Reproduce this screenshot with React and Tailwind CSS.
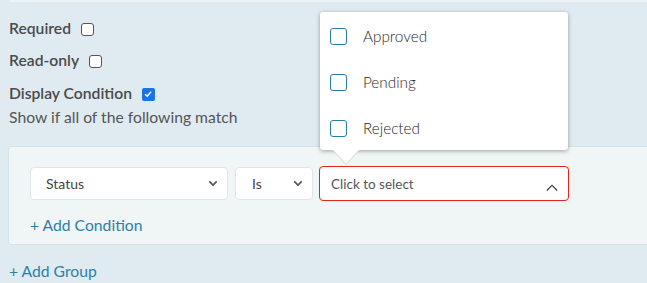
import React from 'react';

function Box({ checked }) {
  return checked ? (
    <span className="inline-flex w-[13px] h-[13px] rounded-[2px] bg-[#1a73e8] items-center justify-center">
      <svg viewBox="0 0 12 12" className="w-[10px] h-[10px]">
        <path d="M2.5 6.3 L5 8.6 L9.6 3.4" fill="none" stroke="#fff" strokeWidth="1.8" />
      </svg>
    </span>
  ) : (
    <span className="inline-block w-[13px] h-[13px] rounded-[3px] border border-[#555] bg-white" />
  );
}

function Chevron({ up }) {
  return up ? (
    <svg viewBox="0 0 12 7" className="w-[12px] h-[7px]">
      <path d="M0.8 6.5 L6 1.3 L11.2 6.5" fill="none" stroke="#444" strokeWidth="1.3" />
    </svg>
  ) : (
    <svg viewBox="0 0 12 8" className="w-[10px] h-[7px]">
      <path d="M1.5 1.5 L6 6 L10.5 1.5" fill="none" stroke="#555" strokeWidth="2" />
    </svg>
  );
}

export default function App() {
  const options = ['Approved', 'Pending', 'Rejected'];

  return (
    <div
      className="relative w-full h-[283px] overflow-hidden bg-[#dfebf0] text-[15.7px] text-[#4d4d4d]"
      style={{ fontFamily: 'Lato, "Open Sans", sans-serif' }}
    >
      <div className="h-[2px] ml-[10px] bg-[#eef4f6]" />

      <div className="pl-[9px]">
        <div className="mt-[17px] h-[20px] flex items-center gap-[10px] font-semibold text-[#4a4a4a]">
          <span>Required</span>
          <Box />
        </div>
        <div className="mt-[12px] h-[20px] flex items-center gap-[10px] font-semibold text-[#4a4a4a]">
          <span>Read-only</span>
          <Box />
        </div>
        <div className="mt-[13px] h-[20px] flex items-center gap-[10px] font-semibold text-[#4a4a4a]">
          <span>Display Condition</span>
          <Box checked />
        </div>
        <div className="mt-[4px] h-[20px] flex items-center text-[#555]">
          Show if all of the following match
        </div>
      </div>

      {/* group box */}
      <div className="mt-[18px] ml-[8px] -mr-[20px] h-[99px] bg-[#f0f5f6] border border-[#d7e2e6] rounded-[3px] pt-[19px] pl-[21px]">
        <div className="flex items-start">
          <div className="w-[198px] h-[33px] mt-[1px] bg-white border border-[#dfe6e9] rounded-[4px] flex items-center justify-between pl-[15px] pr-[9px] text-[14px] text-[#444]">
            <span>Status</span>
            <Chevron />
          </div>
          <div className="ml-[7px] w-[78px] h-[33px] mt-[1px] bg-white border border-[#dfe6e9] rounded-[4px] flex items-center justify-between pl-[16px] pr-[9px] text-[14px] text-[#444]">
            <span>Is</span>
            <Chevron />
          </div>
          <div className="ml-[6px] w-[250px] h-[35px] bg-white border border-[#e3261a] rounded-[4px] flex justify-between pl-[11px] pr-[10px] text-[13.5px] text-[#555]">
            <span className="mt-[7px]">Click to select</span>
            <span className="mt-[17px] flex">
              <Chevron up />
            </span>
          </div>
        </div>
        <div className="mt-[15px] h-[20px] flex items-center text-[#2f7ea8]">+ Add Condition</div>
      </div>

      <div className="mt-[17px] pl-[9px] h-[20px] flex items-center text-[#2f7ea8]">+ Add Group</div>

      {/* dropdown popover */}
      <div className="absolute left-[320px] top-[12px] w-[248px] h-[138px] bg-white rounded-[3px] shadow-[0_1px_4px_rgba(0,0,0,0.35)]">
        <div className="flex flex-col pt-[16px]">
          {options.map((o) => (
            <div key={o} className="h-[16px] mb-[30px] flex items-center">
              <span className="ml-[10px] w-[17px] h-[17px] rounded-[3px] border-[1.5px] border-[#2a7ea6]" />
              <span className="ml-[16px] text-[15.3px] text-[#1f1f1f] font-light">{o}</span>
            </div>
          ))}
        </div>
        <svg className="absolute left-[12px] top-[137px]" width="28" height="17" viewBox="0 0 28 17">
          <path d="M0 0 L14 15.5 L28 0" fill="#fff" stroke="#d3d3d3" strokeWidth="1" />
          <rect x="0" y="0" width="28" height="1.2" fill="#fff" />
        </svg>
      </div>
    </div>
  );
}
